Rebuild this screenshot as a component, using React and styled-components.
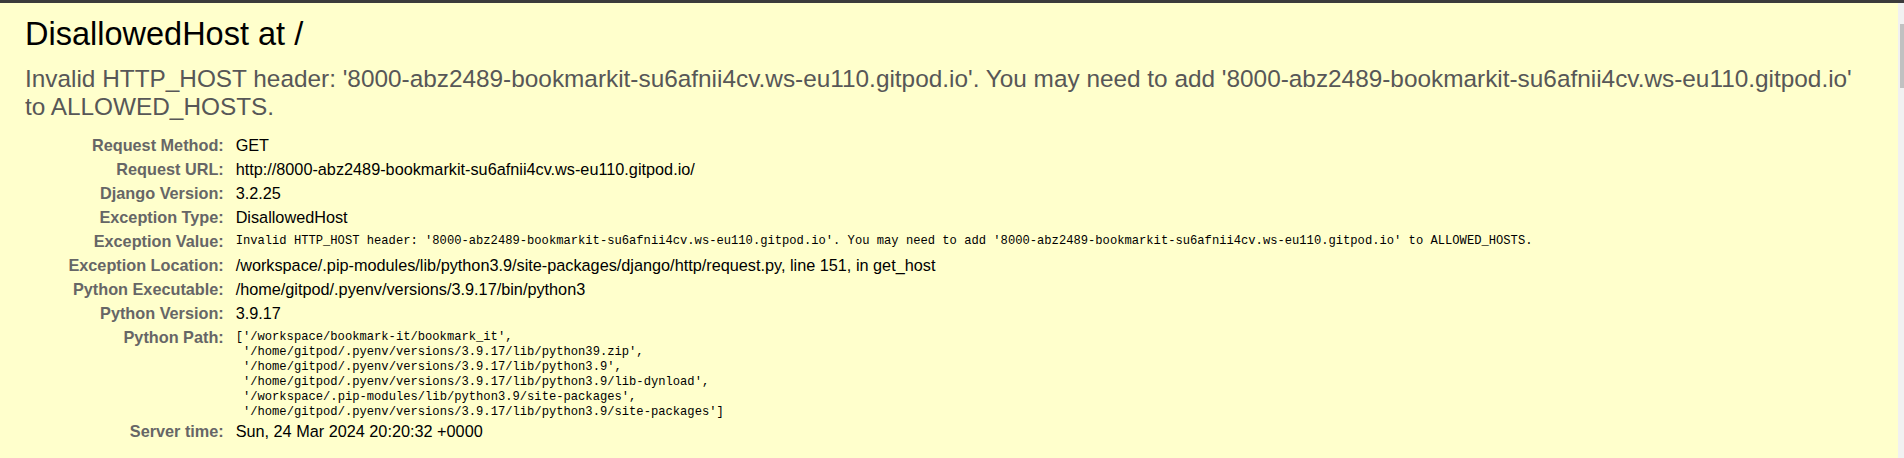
import styled, { createGlobalStyle } from "styled-components";

const GlobalStyle = createGlobalStyle`
  html, body {
    margin: 0;
    padding: 0;
    height: 100%;
    overflow: hidden;
  }
  body {
    font-family: "Liberation Sans", Arial, sans-serif;
    background: #fff;
    color: #000;
  }
`;

const Window = styled.div`
  display: flex;
  flex-direction: column;
  height: 458px;
  border-top: 3px solid #3b3b3b;
  box-sizing: border-box;
`;

const Viewport = styled.div`
  display: flex;
  flex: 1;
  min-height: 0;
`;

const Page = styled.div`
  flex: 1;
  min-width: 0;
  overflow: hidden;
  background: #fff;
`;

const Summary = styled.div`
  background: #ffc;
  padding: 12.5px 25px 14px;
  border-bottom: 1px solid #ddd;
`;

const Traceback = styled.div`
  background: #eee;
  height: 40px;
`;

const Title = styled.h1`
  margin: 0;
  font-size: 32.5px;
  font-weight: normal;
`;

const ExceptionValue = styled.pre`
  margin: 12.5px 0;
  font-family: "Liberation Sans", Arial, sans-serif;
  font-size: 24.375px;
  color: #575757;
  white-space: pre-wrap;
  word-break: break-word;
`;

const Meta = styled.table`
  border-collapse: collapse;
  width: 100%;
  border: none;
  background: transparent;
`;

const Label = styled.th`
  width: 195px;
  padding: 2.5px 8.125px 2.5px 3.75px;
  text-align: right;
  vertical-align: top;
  color: #666;
  font-weight: bold;
  font-size: 16.25px;
  line-height: 19px;
`;

const Value = styled.td`
  padding: 2.5px 3.75px;
  vertical-align: top;
  font-size: 16.25px;
  line-height: 19px;
`;

/* monospace blocks sit a little lower so their first line lines up with the label */
const Code = styled.pre`
  margin: 2px 0 -3px;
  font-family: "Liberation Mono", "DejaVu Sans Mono", monospace;
  font-size: 12.15px;
  line-height: 15px;
  white-space: pre-wrap;
  word-break: break-word;
`;

const Scrollbar = styled.div`
  width: 6px;
  background: #f1f1f1;
  display: flex;
  justify-content: flex-end;
  padding-top: 21px;
  box-sizing: border-box;
`;

const Thumb = styled.div`
  width: 4px;
  height: 64px;
  background: #c1c1c1;
`;

const host = "8000-abz2489-bookmarkit-su6afnii4cv.ws-eu110.gitpod.io";
const message = `Invalid HTTP_HOST header: '${host}'. You may need to add '${host}' to ALLOWED_HOSTS.`;

const sysPath = `['/workspace/bookmark-it/bookmark_it',
 '/home/gitpod/.pyenv/versions/3.9.17/lib/python39.zip',
 '/home/gitpod/.pyenv/versions/3.9.17/lib/python3.9',
 '/home/gitpod/.pyenv/versions/3.9.17/lib/python3.9/lib-dynload',
 '/workspace/.pip-modules/lib/python3.9/site-packages',
 '/home/gitpod/.pyenv/versions/3.9.17/lib/python3.9/site-packages']`;

const rows = [
  { label: "Request Method:", value: "GET" },
  { label: "Request URL:", value: `http://${host}/` },
  { label: "Django Version:", value: "3.2.25" },
  { label: "Exception Type:", value: "DisallowedHost" },
  { label: "Exception Value:", value: message, code: true },
  {
    label: "Exception Location:",
    value:
      "/workspace/.pip-modules/lib/python3.9/site-packages/django/http/request.py, line 151, in get_host",
  },
  {
    label: "Python Executable:",
    value: "/home/gitpod/.pyenv/versions/3.9.17/bin/python3",
  },
  { label: "Python Version:", value: "3.9.17" },
  { label: "Python Path:", value: sysPath, code: true },
  { label: "Server time:", value: "Sun, 24 Mar 2024 20:20:32 +0000" },
];

function App() {
  return (
    <Window>
      <GlobalStyle />
      <Viewport>
        <Page>
          <Summary>
            <Title>DisallowedHost at /</Title>
            <ExceptionValue>{message}</ExceptionValue>
            <Meta>
              <tbody>
                {rows.map((row) => (
                  <tr key={row.label}>
                    <Label>{row.label}</Label>
                    <Value>
                      {row.code ? <Code>{row.value}</Code> : row.value}
                    </Value>
                  </tr>
                ))}
              </tbody>
            </Meta>
          </Summary>
          <Traceback />
        </Page>
        <Scrollbar>
          <Thumb />
        </Scrollbar>
      </Viewport>
    </Window>
  );
}

export default App;
